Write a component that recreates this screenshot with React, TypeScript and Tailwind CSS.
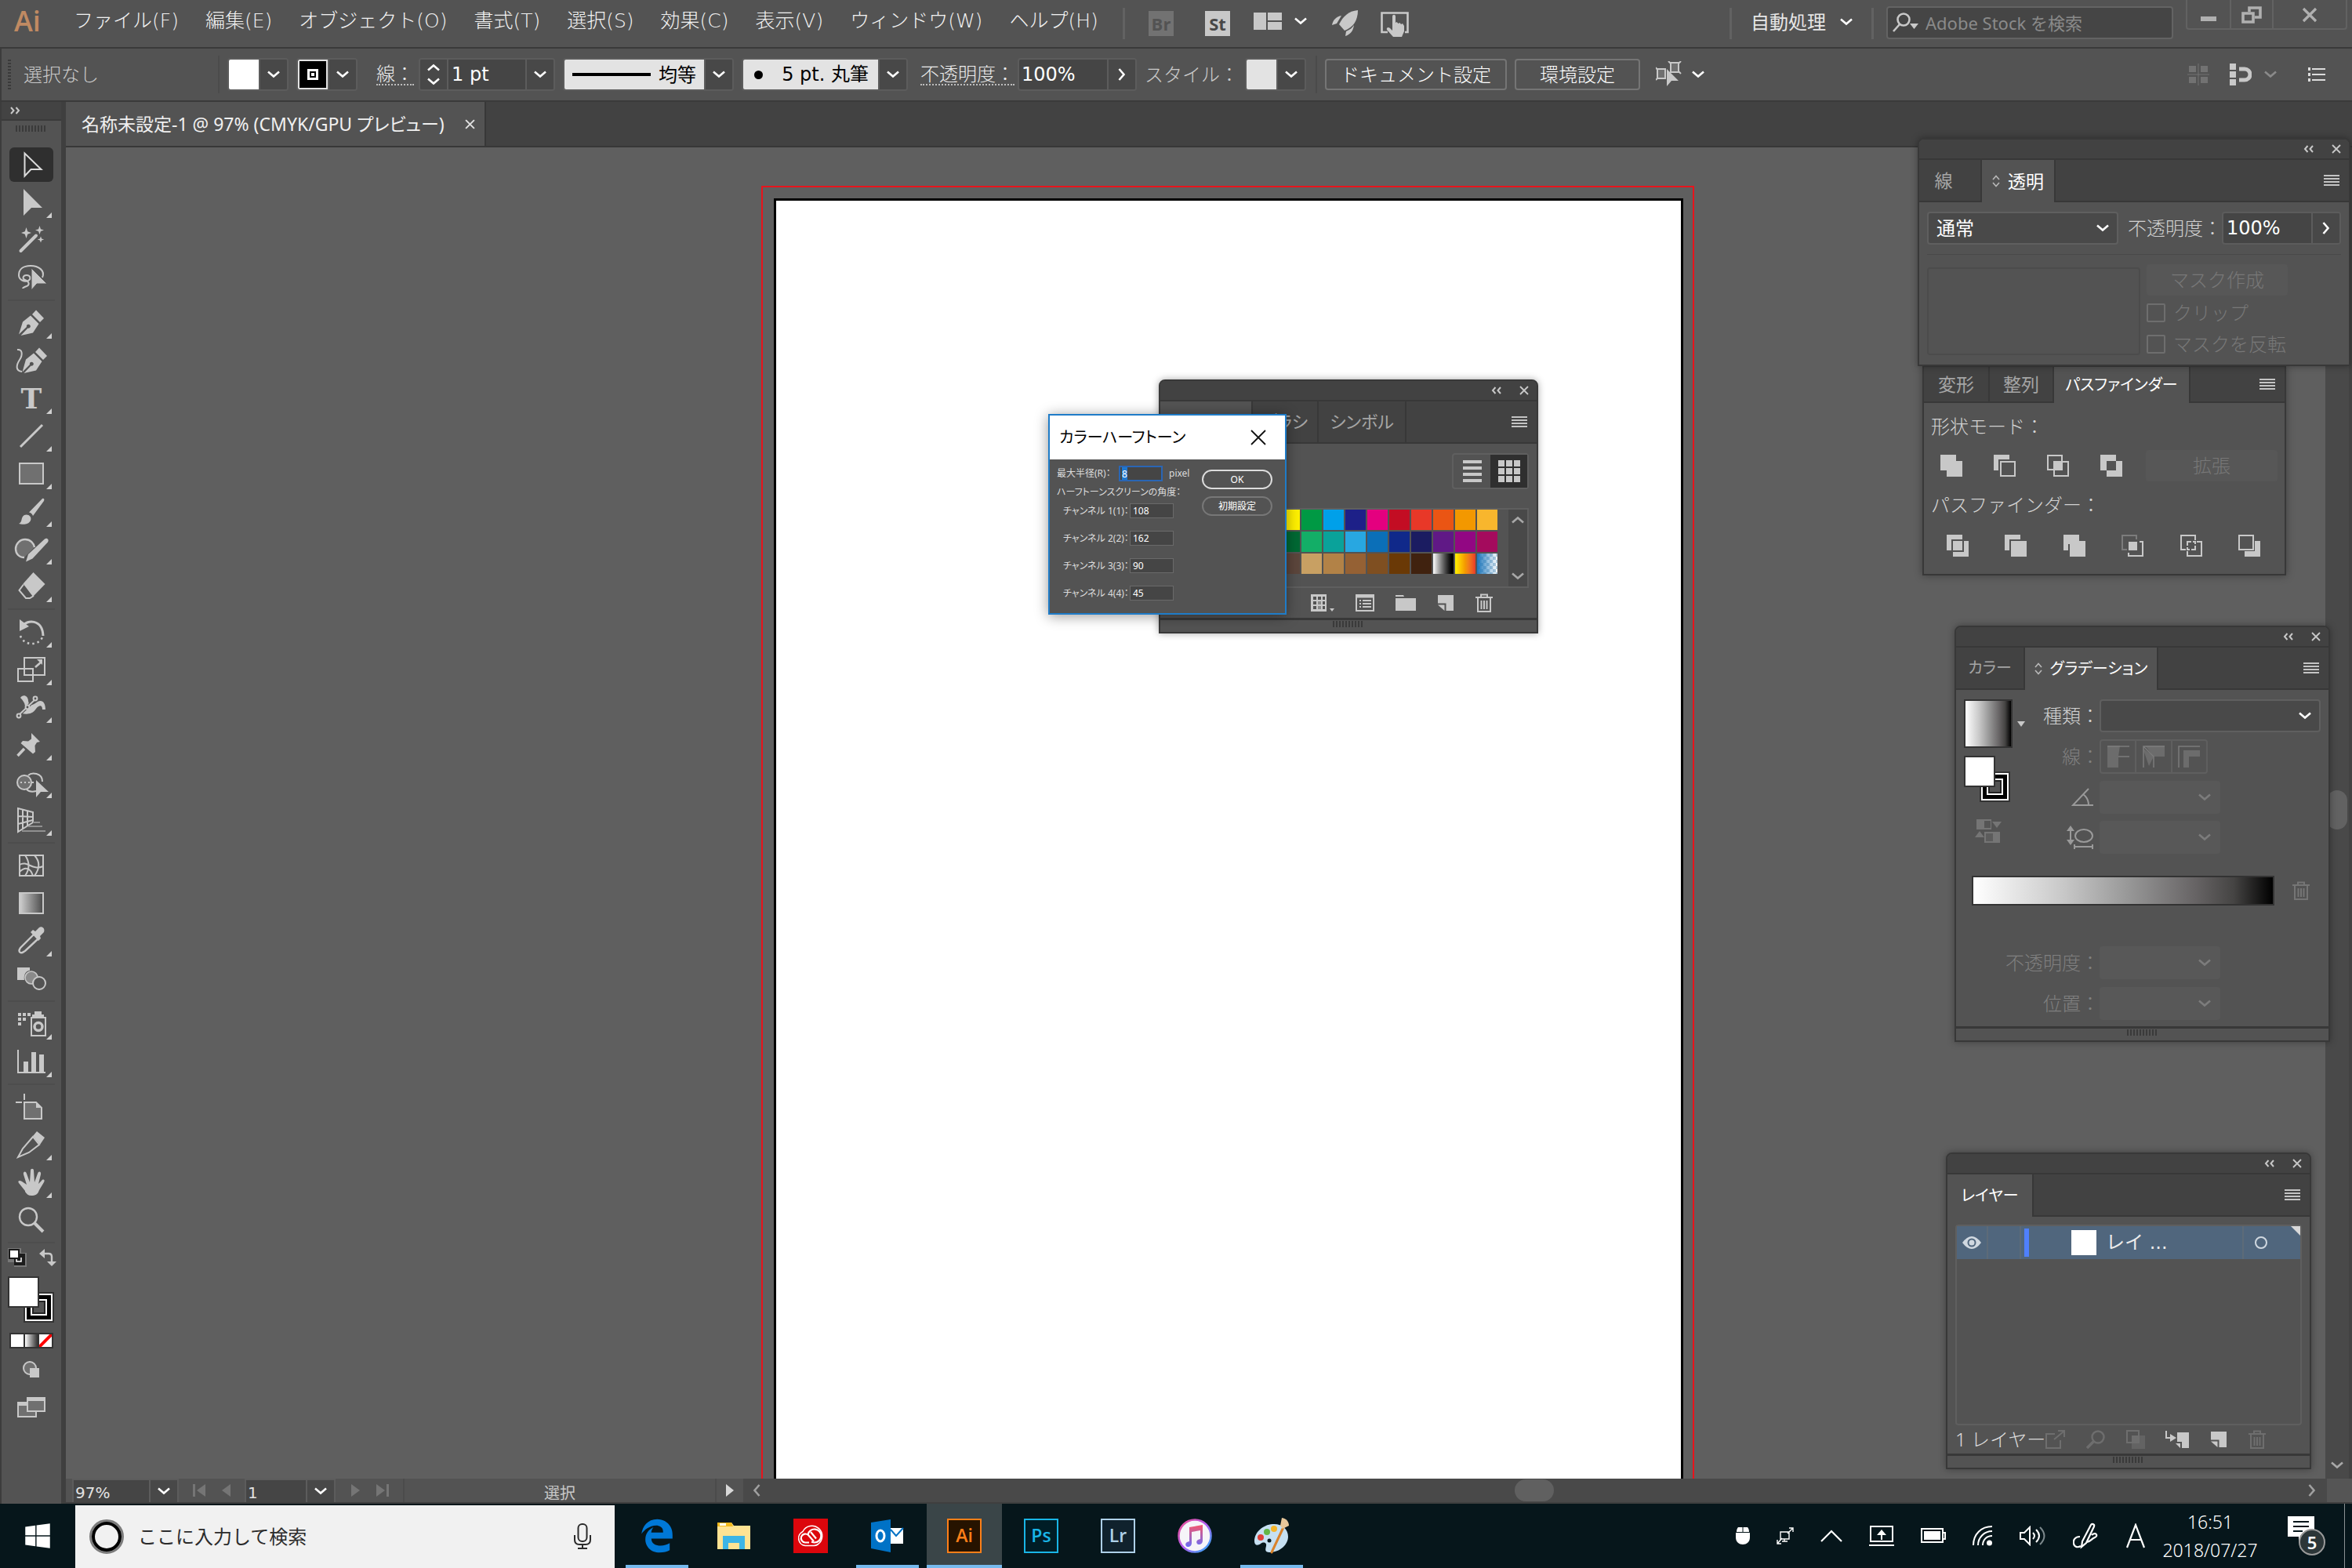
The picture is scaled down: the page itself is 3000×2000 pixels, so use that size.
import React, { useEffect, useRef, useState } from 'react';
import { FaWindows } from 'react-icons/fa';
import { FaEdgeLegacy } from 'react-icons/fa6';
import clsx from 'clsx';

type IconProps = { className?: string };

/* ---------- small shared pieces ---------- */

const Chevron = ({ className = 'w-4 h-[10px] text-white' }: IconProps) => (
  <svg viewBox="0 0 16 10" className={clsx('shrink-0', className)} fill="none" stroke="currentColor" strokeWidth="2.6">
    <path d="M1 1.5 8 7.5 15 1.5" />
  </svg>
);

const ChevronRight = ({ className = 'w-[10px] h-4 text-white' }: IconProps) => (
  <svg viewBox="0 0 10 16" className={clsx('shrink-0', className)} fill="none" stroke="currentColor" strokeWidth="2.6">
    <path d="M1.5 1 7.5 8 1.5 15" />
  </svg>
);

const Collapse = ({ className = '' }: IconProps) => (
  <svg viewBox="0 0 14 10" className={clsx('w-[14px] h-[10px]', className)} fill="none" stroke="#c8c8c8" strokeWidth="2">
    <path d="M5.5 1 2 5l3.5 4M12 1 8.5 5 12 9" />
  </svg>
);

const Cross = ({ className = 'w-3 h-3 text-[#c8c8c8]' }: IconProps) => (
  <svg viewBox="0 0 12 12" className={className} fill="none" stroke="currentColor" strokeWidth="1.8">
    <path d="M1 1l10 10M11 1 1 11" />
  </svg>
);

const Lines = () => (
  <svg viewBox="0 0 20 14" className="w-5 h-[14px]" fill="#c4c4c4">
    <path d="M0 0h20v2H0zM0 4h20v2H0zM0 8h20v2H0zM0 12h20v2H0z" />
  </svg>
);

const UpDown = () => (
  <svg viewBox="0 0 10 16" className="w-[10px] h-4" fill="none" stroke="#b8b8b8" strokeWidth="1.6">
    <path d="M1 6l4-4.5L9 6M1 10l4 4.5L9 10" />
  </svg>
);

const Grip = () => (
  <svg viewBox="0 0 40 8" className="w-10 h-2" fill="#3a3a3a">
    {[0, 4, 8, 12, 16, 20, 24, 28, 32, 36].map((x) => (
      <rect key={x} x={x} y="0" width="2" height="8" />
    ))}
  </svg>
);

const Trash = ({ className = '' }: IconProps) => (
  <svg viewBox="0 0 22 24" className={clsx('w-[22px] h-6', className)} fill="none" stroke="currentColor" strokeWidth="2">
    <path d="M0 5h22M7 4V1.5h8V4M3 6v17h16V6M7.5 9v11M11 9v11M14.5 9v11" />
  </svg>
);

const NewSheet = ({ className = '' }: IconProps) => (
  <svg viewBox="0 0 22 22" className={clsx('w-[22px] h-[22px]', className)} fill="currentColor">
    <path d="M1 1h20v20H11.5V11.5H1z" />
    <path d="M1 13.5h8.5V21z" />
  </svg>
);

const FillStroke = () => (
  <svg viewBox="0 0 60 60" className="w-[60px] h-[60px]">
    <rect x="20" y="20" width="39" height="39" fill="#333" />
    <rect x="22" y="22" width="35" height="35" fill="#fff" />
    <rect x="24" y="24" width="31" height="31" fill="#000" />
    <rect x="29" y="29" width="21" height="21" fill="#fff" />
    <rect x="31" y="31" width="17" height="17" fill="#222" />
    <rect x="33" y="33" width="13" height="13" fill="#535353" />
    <rect x="0" y="0" width="40" height="40" fill="#333" />
    <rect x="2" y="2" width="36" height="36" fill="#fff" />
  </svg>
);

/* ---------- tool icons, all on a 40 unit grid ---------- */

const tools: Record<string, React.ReactNode> = {
  selection: <path d="M11.5 5.5v29l8-8.5h13z" fill="none" stroke="#dcdcdc" strokeWidth="2" />,
  direct: <path d="M10 3v34l10-10h14z" />,
  wand: (
    <>
      <path d="M6.5 34 26 14.5" stroke="currentColor" strokeWidth="4" strokeLinecap="round" />
      <path d="M13.5 4l1.7 5.3L20 11l-4.8 1.7-1.7 5.3-1.7-5.3L7 11l4.8-1.7zM30.5 2l1.4 4.2L36 7.5l-4.1 1.4-1.4 4.2-1.4-4.2L25 7.5l4.1-1.3zM32 15.5l1.2 3 3 1-3 1-1.2 3-1.2-3-3-1 3-1z" />
    </>
  ),
  lasso: (
    <>
      <path d="M34 20C38 11 29 5 19 5S4 10 4 17c0 6 7 9 12 7 4-2 3-7-2-7s-6 5-2 6 7 6 2 8-5 3-5 3" fill="none" stroke="currentColor" strokeWidth="2" />
      <path d="M20 8v28l7-8h13z" stroke="#535353" strokeWidth="1" />
    </>
  ),
  pen: (
    <>
      <path d="M21 9l5-5.5L36 14l-5 5z" />
      <path d="M19 10.5 29.5 21 22 32.5 6.5 36l9-9.5a2.5 2.5 0 1 0-1.5-1.5L4 34.5l5-16z" />
    </>
  ),
  curvature: (
    <>
      <path d="M25 9l5-5.5L40 14l-5 5z" />
      <path d="M23 10.5 33.5 21 26 32.5 10.5 36l9-9.5a2.5 2.5 0 1 0-1.5-1.5L8.5 34.5l4.5-16z" />
      <path d="M2 6c7-1 7 7 3 13s-6 14 3 15" fill="none" stroke="currentColor" strokeWidth="2" />
    </>
  ),
  line: <path d="M6 34 34 6" stroke="currentColor" strokeWidth="3" />,
  rectangle: <rect x="5" y="7" width="30" height="26" fill="#707070" stroke="currentColor" strokeWidth="2" />,
  brush: (
    <>
      <path d="M4 36c5-2 2-8 7-11 5-2 10 2 8 7-3 6-11 5-15 4z" />
      <path d="M17 21.5 34 4c2-1 3 1 2 3L22 26c-1-2.5-2.5-4-5-4.5z" />
    </>
  ),
  shaper: (
    <>
      <path d="M11 31C4 31 0 26 0 20S5 8 12 8s11 5 12 10" fill="#707070" stroke="currentColor" strokeWidth="2.4" />
      <path d="M13 36.5l3-9.5L37 7.5c3-2 6 1 4 4L21.5 32.5z" />
    </>
  ),
  eraser: (
    <>
      <path d="M22.5 2 37.5 17 22 33 9.5 16.5z" />
      <path d="M10 17.5 4.5 25 13 35h5l5-3" fill="none" stroke="currentColor" strokeWidth="2" />
    </>
  ),
  rotate: (
    <>
      <path d="M8 13C14 4 34 3 35 25" fill="none" stroke="currentColor" strokeWidth="3" />
      <path d="M5 4v15l12-6z" />
      <path d="M6 25c4 12 22 14 28 2" fill="none" stroke="currentColor" strokeWidth="2.5" strokeDasharray="2.5 4" />
    </>
  ),
  scale: (
    <g fill="none" stroke="currentColor" strokeWidth="2">
      <path d="M11 5h26v22H11zM3 19h19v16H3z" />
      <path d="M25 17l8-7" strokeWidth="2.6" />
      <path d="M34 7v7l-7-7z" fill="currentColor" stroke="none" />
    </g>
  ),
  width: (
    <>
      <path d="M6 8c3-5 10-3 10 4 1 8 7 5 12 1 5-3 10 0 10 10h-4c0-6-4-6-8-1-5 8-13 7-18 6 7-7 4-14-2-20z" />
      <path d="M4 30 25 10" stroke="#535353" strokeWidth="4" />
      <path d="M4 30 25 10" stroke="currentColor" strokeWidth="1.8" />
      <g fill="#535353" stroke="currentColor" strokeWidth="2">
        <circle cx="4" cy="31" r="2.4" />
        <circle cx="15" cy="20" r="2.4" />
        <circle cx="25" cy="9" r="2.4" />
      </g>
    </>
  ),
  pin: (
    <>
      <path d="M20 5l11 11-4 1-2.5 4 .5 8-3 2.5L6.5 18l2.5-3 7 .5 4-3z" />
      <path d="M2.5 34 11 25" stroke="currentColor" strokeWidth="3.5" />
    </>
  ),
  builder: (
    <>
      <path d="M16 11c4-4 18-4 18 8M14 29c3 3 8 3 12 2" fill="none" stroke="currentColor" strokeWidth="2" />
      <ellipse cx="11" cy="20" rx="9" ry="9" fill="#707070" stroke="currentColor" strokeWidth="2" />
      <path d="M6 20h20" stroke="currentColor" strokeWidth="2" strokeDasharray="2 3" />
      <path d="M26 17v22l6-7h10z" />
    </>
  ),
  perspective: (
    <g fill="none" stroke="currentColor" strokeWidth="2">
      <path d="M3 5v30l19-12V10zM9 6v25M15 8v19M3 15l19 1M3 25l19-5" />
      <path d="M22 23h9M16 28h18M8 34h30" stroke="#909090" />
    </g>
  ),
  mesh: (
    <g fill="none" stroke="currentColor" strokeWidth="2">
      <path d="M5 7h30v26H5z" />
      <path d="M5 19c10-6 16 8 30 2M12 7c6 8 6 18 0 26M24 7c8 9 6 18 0 26M5 28c8-8 14-4 17 5" />
    </g>
  ),
  gradient: (
    <>
      <linearGradient id="toolGradient">
        <stop offset="0" stopColor="#d0d0d0" />
        <stop offset="1" stopColor="#4a4a4a" />
      </linearGradient>
      <rect x="5" y="7" width="30" height="26" fill="url(#toolGradient)" stroke="currentColor" strokeWidth="2" />
    </>
  ),
  eyedropper: (
    <>
      <path d="M23 12 6 29c-2 3-2 5 0 6s4-1 6-2L28 18" fill="none" stroke="currentColor" strokeWidth="2.4" />
      <path d="M19 9l3-3 3 2 5-5c3-2 8 1 6 6l-5 5 1 3-3 3z" />
    </>
  ),
  blend: (
    <>
      <path d="M2 6h16v4c-5 0-8 5-7 12H2z" />
      <ellipse cx="20" cy="19" rx="8" ry="8" fill="#8a8a8a" stroke="currentColor" strokeWidth="1.6" />
      <ellipse cx="30" cy="26" rx="8" ry="8" fill="#535353" stroke="currentColor" strokeWidth="2" />
    </>
  ),
  spray: (
    <>
      <path d="M3 6h4v4H3zM9 6h4v4H9zM15 6h4v4h-4zM3 12h4v4H3zM9 12h4v4H9zM3 18h4v4H3zM24 4h9v4h3v4H21V8h3z" />
      <path d="M20 12h18v23H20z" fill="none" stroke="currentColor" strokeWidth="2" />
      <circle cx="29" cy="23.5" r="5" fill="none" stroke="currentColor" strokeWidth="3.5" />
    </>
  ),
  graph: (
    <>
      <path d="M10 20h6v14h-6zM20 8h6v26h-6zM30 11h6v23h-6z" />
      <path d="M3 5v29h35" fill="none" stroke="currentColor" strokeWidth="2" />
    </>
  ),
  artboard: (
    <>
      <path d="M0 14h8M11 3v8" stroke="currentColor" strokeWidth="2" />
      <path d="M11 14h15l7 7v14H11z" fill="#707070" stroke="currentColor" strokeWidth="2" />
      <path d="M26 14v7h7z" />
    </>
  ),
  slice: (
    <>
      <path d="M22 9l5-6 10 8-6 9z" />
      <path d="M22 10 9 25 3 36l14-6 13-10z" fill="none" stroke="currentColor" strokeWidth="2" />
    </>
  ),
  hand: (
    <path d="M12 31 4 21c-2-3 1-4 4-2l6 4-4-13c-1-4 3-5 4-1l4 11 1-15c0-3 4-3 4 0l1 15 4-11c1-4 5-3 4 1l-3 12 4-4c2-3 5-1 3 2l-6 10c-2 6-5 7-10 7-4 0-6-2-8-5z" />
  ),
  zoom: (
    <>
      <circle cx="16" cy="16" r="11" fill="none" stroke="currentColor" strokeWidth="2.4" />
      <path d="M24 24 35 35" stroke="currentColor" strokeWidth="4" />
    </>
  ),
};

const toolGroups = [
  [['selection', ''], ['direct', 'f'], ['wand', ''], ['lasso', '']],
  [['pen', 'f'], ['curvature', ''], ['type', 'f'], ['line', 'f'], ['rectangle', 'f'], ['brush', 'f'], ['shaper', 'f'], ['eraser', 'f']],
  [['rotate', 'f'], ['scale', 'f'], ['width', 'f'], ['pin', 'f'], ['builder', 'f'], ['perspective', 'f']],
  [['mesh', ''], ['gradient', ''], ['eyedropper', 'f'], ['blend', '']],
  [['spray', 'f'], ['graph', 'f']],
  [['artboard', ''], ['slice', 'f'], ['hand', 'f'], ['zoom', '']],
];

const Toolbar = () => {
  const [active, setActive] = useState('selection');
  return (
    <aside className="w-[84px] shrink-0 border-l-2 border-r-[6px] border-l-[#3c3c3c] border-r-[#3f3f3f] bg-[#535353] flex flex-col items-center">
      <div className="w-full h-6 shrink-0 bg-[#434343] border-b-2 border-[#3a3a3a] flex items-center pl-[10px]">
        <Collapse className="rotate-180" />
      </div>
      <div className="h-8 shrink-0 pt-[6px]">
        <Grip />
      </div>
      {toolGroups.map((group, i) => (
        <div key={i} className="w-full shrink-0 flex flex-col items-center">
          {i > 0 && <div className="w-[60px] h-[2px] my-1 bg-[#4d4d4d]" />}
          {group.map(([name, flyout]) => (
            <button
              key={name}
              aria-label={name}
              onClick={() => setActive(name)}
              className="relative w-[60px] h-12 flex items-center justify-center text-[#c8c8c8]"
            >
              <span
                className={clsx('w-14 h-11 rounded-md flex items-center justify-center', active === name && 'bg-[#2f2f2f]')}
              >
                {name === 'type' ? (
                  <span className="text-[36px] leading-10 font-bold [font-family:'DejaVu_Serif',serif]">T</span>
                ) : (
                  <svg viewBox="0 0 40 40" className="w-10 h-10 overflow-visible" fill="currentColor">
                    {tools[name]}
                  </svg>
                )}
              </span>
              {flyout && (
                <svg viewBox="0 0 7 7" className="absolute right-1 bottom-1 w-[7px] h-[7px]" fill="#d0d0d0">
                  <path d="M7 0v7H0z" />
                </svg>
              )}
            </button>
          ))}
        </div>
      ))}
      <div className="w-[60px] h-[2px] mt-1 bg-[#4d4d4d] shrink-0" />
      <div className="w-16 h-9 shrink-0 flex items-center justify-between pl-[2px]">
        <svg viewBox="0 0 24 24" className="w-6 h-6">
          <path d="M0 0h17v6h7v18H8v-6H0z" fill="#777" />
          <path d="M8 7h14v15H8z" fill="#1c1c1c" />
          <path d="M11 14v3h6v-5" fill="none" stroke="#fff" strokeWidth="1.5" />
          <path d="M1 1h14v13H1z" fill="#1c1c1c" />
          <path d="M3 3h10v9H3z" fill="#fff" />
        </svg>
        <svg viewBox="0 0 22 22" className="w-[22px] h-[22px]" fill="#c8c8c8">
          <path d="M0 6l7-6v12zM10 16h12l-6 6z" />
          <path d="M6 6h6q4 0 4 4v7" fill="none" stroke="#c8c8c8" strokeWidth="2.4" />
        </svg>
      </div>
      <div className="mt-[6px] shrink-0">
        <FillStroke />
      </div>
      <div className="mt-3 h-5 w-14 shrink-0 bg-[#333] p-[2px] flex gap-[2px]">
        <div className="flex-1 bg-white" />
        <div className="flex-1 bg-linear-to-r from-white to-[#333]" />
        <svg viewBox="0 0 16 16" className="flex-1 min-w-0 bg-white">
          <path d="M0 16 16 0" stroke="#f00" strokeWidth="4" />
        </svg>
      </div>
      <svg viewBox="0 0 22 22" className="mt-4 w-[22px] h-[22px] shrink-0">
        <ellipse cx="9" cy="9" rx="8" ry="8" fill="#707070" stroke="#c8c8c8" strokeWidth="2" />
        <path d="M9 9h12v12H9z" fill="#c8c8c8" />
      </svg>
      <svg viewBox="0 0 36 26" className="mt-6 w-9 h-[26px] shrink-0" fill="#707070" stroke="#c8c8c8" strokeWidth="2">
        <path d="M1 7h23v18H1z" />
        <path d="M1 9h23" strokeWidth="4" />
        <path d="M13 1h22v17H13z" />
        <path d="M13 3h22" strokeWidth="4" />
      </svg>
    </aside>
  );
};

/* ---------- top bars ---------- */

const menus = [
  'ファイル(F)', '編集(E)', 'オブジェクト(O)', '書式(T)', '選択(S)', '効果(C)', '表示(V)', 'ウィンドウ(W)', 'ヘルプ(H)',
];

const MenuBar = () => (
  <header className="h-[62px] shrink-0 border-b-2 border-[#3a3a3a] bg-[#535353] flex items-start text-[#e6e6e6]">
    <div className="w-[94px] pl-[18px] pt-[6px] text-[36px] leading-[42px] font-semibold text-[#c08a62] [font-family:'Open_Sans',sans-serif]">Ai</div>
    <nav className="w-[1338px] shrink-0 h-[54px] flex items-center gap-[34px] text-[25px] leading-8 font-light text-[#f2f2f2] whitespace-nowrap [font-family:'DejaVu_Sans','Noto_Sans_CJK_JP',sans-serif]">
      {menus.map((m) => (
        <button key={m}>{m}</button>
      ))}
    </nav>
    <div className="w-[3px] h-10 mt-[10px] bg-[#626262]" />
    <div className="h-[60px] ml-[30px] flex items-center gap-10">
      <span className="w-8 h-8 bg-[#727272] text-[#535353] text-[22px] leading-8 font-bold text-center [font-family:'Open_Sans',sans-serif]">Br</span>
      <span className="w-8 h-8 bg-[#c8c8c8] text-[#484848] text-[22px] leading-8 font-bold text-center [font-family:'Open_Sans',sans-serif]">St</span>
    </div>
    <div className="h-[54px] ml-[30px] flex items-center gap-4">
      <svg viewBox="0 0 36 22" className="w-9 h-[22px]" fill="#c8c8c8">
        <path d="M0 0h16v22H0zM18 0h18v10H18zM18 12h18v10H18z" />
      </svg>
      <Chevron />
    </div>
    <div className="h-[60px] ml-8 flex items-center gap-7 text-[#c8c8c8]">
      <svg viewBox="0 0 34 34" className="w-[34px] h-[34px]" fill="currentColor">
        <path d="M33 0C21 1 14 8 9 18l7 8C27 22 33 13 33 0z" />
        <path d="M12 7C5 8 1 13 0 19l6-2 6-10zM28 19c-1 8-5 12-11 14l1-6c5-2 8-5 10-8z" />
      </svg>
      <svg viewBox="0 0 36 30" className="w-9 h-[30px] overflow-visible" fill="currentColor">
        <path d="M9 26H1.5V1.5h33V26H31" fill="none" stroke="currentColor" strokeWidth="2.6" />
        <path d="M15 6c0-3 4-3 4 0v8l1.5-1 2 2 2-1 1.5 2 2-1 2 3v7l-3 7H16l-8-9c-1-3 2-4 4-2l3 3z" />
      </svg>
    </div>
    <div className="flex-1" />
    <div className="w-[3px] h-10 mt-[10px] bg-[#626262]" />
    <button className="h-[56px] px-6 flex items-center gap-[18px] text-2xl">
      自動処理
      <Chevron />
    </button>
    <div className="w-[3px] h-10 mt-[10px] bg-[#626262]" />
    <label className="ml-4 mt-2 w-[366px] h-[42px] rounded border-2 border-[#636363] bg-[#454545] flex items-center pl-[6px]">
      <svg viewBox="0 0 34 26" className="w-[34px] h-[26px] shrink-0" fill="none" stroke="#c8c8c8" strokeWidth="2.6">
        <circle cx="14" cy="9" r="7.5" />
        <path d="M9 15 1 24" />
        <path d="M22 14h11l-5.5 7z" fill="#c8c8c8" stroke="none" />
      </svg>
      <input
        placeholder="Adobe Stock を検索"
        aria-label="Adobe Stock を検索"
        className="ml-2 flex-1 min-w-0 bg-transparent text-[22px] outline-none placeholder:text-[#8a8a8a]"
      />
    </label>
    <div className="ml-4 mr-[6px] w-[206px] h-[38px] border-2 border-t-0 border-[#626262] rounded-b flex text-[#b0b0b0]">
      <button aria-label="最小化" className="w-14 border-r-2 border-[#626262] flex justify-center pt-[21px]">
        <span className="w-5 h-[6px] bg-[#b0b0b0]" />
      </button>
      <button aria-label="元に戻す" className="w-[54px] border-r-2 border-[#626262] flex justify-center pt-2">
        <svg viewBox="0 0 26 22" className="w-[26px] h-[22px]" fill="none" stroke="currentColor" strokeWidth="3.6">
          <path d="M10 7V2h14v12h-7" />
          <path d="M2 9h13v11H2z" />
        </svg>
      </button>
      <button aria-label="閉じる" className="flex-1 flex justify-center pt-[9px]">
        <svg viewBox="0 0 20 20" className="w-5 h-5" fill="none" stroke="currentColor" strokeWidth="3.2">
          <path d="M2 2l16 16M18 2 2 18" />
        </svg>
      </button>
    </div>
  </header>
);

const ChevCell = ({ label, right }: { label: string; right?: boolean }) => (
  <button aria-label={label} className="w-9 h-full shrink-0 bg-[#484848] border-l-2 border-[#5c5c5c] flex items-center justify-center">
    {right ? <ChevronRight /> : <Chevron />}
  </button>
);

const boxCls = 'h-[42px] shrink-0 rounded border-2 border-[#5c5c5c] bg-[#454545] flex items-center overflow-hidden';

const ControlBar = () => (
  <section className="h-[68px] shrink-0 border-b-2 border-[#3a3a3a] border-l-2 border-l-[#3c3c3c] bg-[#535353] flex items-center text-2xl font-light text-[#ececec] whitespace-nowrap">
    <div className="ml-2 w-1 h-[38px] bg-[repeating-linear-gradient(#3a3a3a_0_2px,transparent_2px_4px)]" />
    <span className="ml-4 w-[248px] text-[#cacaca]">選択なし</span>
    <div className="w-[2px] h-12 bg-[#4b4b4b]" />
    <div className={clsx(boxCls, 'ml-[10px] w-[78px]')}>
      <div className="flex-1 h-full bg-white" />
      <ChevCell label="塗り" />
    </div>
    <div className={clsx(boxCls, 'ml-[10px] w-[78px]')}>
      <div className="flex-1 h-full bg-black border-2 border-[#e3e3e3] flex items-center justify-center">
        <div className="w-[14px] h-[14px] border-[3px] border-white flex items-center justify-center">
          <div className="w-1 h-1 bg-white" />
        </div>
      </div>
      <ChevCell label="線の色" />
    </div>
    <label htmlFor="strokeWidth" className="ml-6 border-b-2 border-dotted border-[#bdbdbd] leading-[26px]">線：</label>
    <div className={clsx(boxCls, 'ml-[6px] w-[174px]')}>
      <button aria-label="線幅の増減" className="w-9 h-full bg-[#484848] border-r-2 border-[#5c5c5c] flex flex-col items-center justify-center gap-2">
        <Chevron className="w-4 h-[10px] rotate-180 text-white" />
        <Chevron />
      </button>
      <input id="strokeWidth" defaultValue="1 pt" className="flex-1 min-w-0 pl-1 bg-transparent text-white font-normal outline-none [font-family:'DejaVu_Sans',sans-serif]" />
      <ChevCell label="線幅の一覧" />
    </div>
    <div className={clsx(boxCls, 'ml-[10px] w-[218px]')}>
      <div className="flex-1 h-full bg-[#e3e3e3] text-black font-normal flex items-center justify-between px-[10px]">
        <span className="w-[100px] h-1 bg-black" />
        均等
      </div>
      <ChevCell label="可変線幅" />
    </div>
    <div className={clsx(boxCls, 'ml-[10px] w-[212px]')}>
      <div className="flex-1 h-full bg-[#e3e3e3] text-black font-normal flex items-center justify-between pl-[14px] pr-3 [font-family:'DejaVu_Sans','Noto_Sans_CJK_JP',sans-serif]">
        <span className="w-[11px] h-[11px] rounded-full bg-black" />
        5 pt. 丸筆
      </div>
      <ChevCell label="ブラシ定義" />
    </div>
    <label htmlFor="opacity" className="ml-4 border-b-2 border-dotted border-[#bdbdbd] leading-[26px]">不透明度：</label>
    <div className={clsx(boxCls, 'ml-1 w-[152px]')}>
      <input id="opacity" defaultValue="100%" className="flex-1 min-w-0 pl-[3px] bg-transparent text-white font-normal outline-none [font-family:'DejaVu_Sans',sans-serif]" />
      <ChevCell label="不透明度を変更" right />
    </div>
    <span className="ml-[10px] text-[#cacaca]">スタイル：</span>
    <div className={clsx(boxCls, 'ml-2 w-[78px]')}>
      <div className="flex-1 h-full bg-[#e3e3e3]" />
      <ChevCell label="グラフィックスタイル" />
    </div>
    <div className="ml-3 w-[2px] h-12 bg-[#4b4b4b]" />
    <button className="ml-[10px] w-[232px] h-10 rounded border-2 border-[#757575] text-white">ドキュメント設定</button>
    <button className="ml-[10px] w-[160px] h-10 rounded border-2 border-[#757575] text-white">環境設定</button>
    <button aria-label="類似オブジェクトを選択" className="ml-5 flex items-center gap-3">
      <svg viewBox="0 0 34 34" className="w-[34px] h-[34px]" fill="none" stroke="#c8c8c8" strokeWidth="2">
        <path d="M19 2h10v12H19zM2 10h10v12H2z" fill="#707070" />
        <path d="M16 0l3 3M32 0l-3 3M32 16l-3-3M0 8l2 3M0 24l3-3" />
        <path d="M14 10v22l6-7h9z" fill="#c8c8c8" stroke="none" />
      </svg>
      <Chevron />
    </button>
    <div className="flex-1" />
    <svg viewBox="0 0 28 28" className="w-7 h-7" fill="#727272">
      <path d="M2 3h9v8H2zM17 3h9v8h-9zM2 17h9v8H2zM17 17h9v8h-9z" />
      <path d="M13.5 0h1v28h-1zM0 13.5h28v1H0z" />
    </svg>
    <svg viewBox="0 0 28 28" className="ml-[26px] w-7 h-7" fill="#c8c8c8">
      <path d="M0 0h8v8H0zM0 10h8v8H0zM0 20h8v8H0z" />
      <path d="M12 7h7a7 7 0 0 1 0 14h-7" fill="none" stroke="#c8c8c8" strokeWidth="5" />
    </svg>
    <Chevron className="ml-4 w-4 h-[10px] text-[#8a8a8a]" />
    <svg viewBox="0 0 22 18" className="ml-10 mr-[34px] w-[22px] h-[18px]" fill="#dcdcdc">
      <path d="M0 0h3v4H0zM5 1h17v2H5zM0 7h3v4H0zM5 8h17v2H5zM0 14h3v4H0zM5 15h17v2H5z" />
    </svg>
  </section>
);

const StatusBar = () => (
  <footer className="h-8 shrink-0 bg-[#535353] border-b-2 border-[#3f3f3f] flex items-center text-xl leading-8 text-[#e2e2e2]">
    <div className="ml-2 h-full w-[136px] bg-[#454545] border-2 border-b-0 border-[#5c5c5c] flex overflow-hidden">
      <input aria-label="ズーム" defaultValue="97%" className="flex-1 min-w-0 pl-[2px] pt-1 bg-transparent outline-none [font-family:'DejaVu_Sans',sans-serif]" />
      <ChevCell label="ズームの一覧" />
    </div>
    <svg viewBox="0 0 50 16" className="ml-[18px] w-[50px] h-4" fill="#757575">
      <path d="M0 0h3v16H0zM16 0v16L5 8zM48 0v16L37 8z" />
    </svg>
    <div className="ml-4 h-full w-[116px] bg-[#454545] border-2 border-b-0 border-[#5c5c5c] flex overflow-hidden">
      <input aria-label="アートボード" defaultValue="1" className="flex-1 min-w-0 pl-[2px] pt-1 bg-transparent outline-none [font-family:'DejaVu_Sans',sans-serif]" />
      <ChevCell label="アートボードの一覧" />
    </div>
    <svg viewBox="0 0 50 16" className="ml-5 w-[50px] h-4" fill="#757575">
      <path d="M0 0v16l11-8zM32 0v16l11-8zM45 0h3v16h-3z" />
    </svg>
    <div className="ml-4 w-[2px] h-full bg-[#4b4b4b]" />
    <span className="w-[396px] text-center pt-2 text-[#c8c8c8]">選択</span>
    <div className="w-[2px] h-full bg-[#4b4b4b]" />
    <svg viewBox="0 0 10 16" className="ml-3 w-[10px] h-4" fill="#d8d8d8">
      <path d="M0 0v16l10-8z" />
    </svg>
    <div className="ml-3 flex-1 h-full bg-[#494949] flex items-center justify-between pl-3 pr-[14px]">
      <ChevronRight className="w-[10px] h-4 rotate-180 text-[#a0a0a0]" />
      <div className="w-[50px] h-7 rounded-full bg-[#606060]" />
      <ChevronRight className="w-[10px] h-4 text-[#a0a0a0]" />
    </div>
    <div className="w-8 h-full bg-[#555]" />
  </footer>
);

/* ---------- floating panels ---------- */

const panelCls = 'absolute border-2 border-[#383838] bg-[#535353] shadow-[0_0_10px_rgba(0,0,0,0.35)] text-2xl font-light text-[#d2d2d2] whitespace-nowrap';

const TitleBar = () => (
  <div className="h-[26px] rounded-t-md bg-[#424242] border-b-2 border-[#383838] flex items-center justify-end gap-[22px] pr-[10px]">
    <button aria-label="折りたたむ"><Collapse /></button>
    <button aria-label="閉じる"><Cross /></button>
  </div>
);

const Tab = ({ active, className, children }: { active?: boolean; className?: string; children?: React.ReactNode }) => (
  <button
    role="tab"
    aria-selected={!!active}
    className={clsx(
      "border-r-2 border-[#383838] flex items-center justify-center gap-[10px] font-normal [font-feature-settings:'palt']",
      active ? 'bg-[#535353] text-white' : 'bg-[#424242] text-[#a5a5a5] border-b-2',
      className,
    )}
  >
    {children}
  </button>
);

const TabFill = () => (
  <div className="flex-1 bg-[#424242] border-b-2 border-[#383838] flex items-center justify-end pr-3">
    <button aria-label="パネルメニュー"><Lines /></button>
  </div>
);

const PanelGrip = () => (
  <div className="h-[18px] border-t-[3px] border-[#383838] flex justify-center pt-px">
    <Grip />
  </div>
);

const Select = ({ id, value, disabled, className }: { id: string; value?: string; disabled?: boolean; className?: string }) => (
  <div className={clsx('relative', className)}>
    <select
      id={id}
      aria-label={id}
      disabled={disabled}
      className={clsx(
        'block w-full h-[42px] appearance-none rounded pl-[10px] font-normal outline-none',
        disabled ? 'bg-[#585858]' : 'bg-[#494949] border-2 border-[#5f5f5f] text-white',
      )}
    >
      <option>{value}</option>
    </select>
    <Chevron className={clsx('absolute right-3 top-4 w-4 h-[10px]', disabled ? 'text-[#7c7c7c]' : 'text-white')} />
  </div>
);

const TransparencyPanel = () => (
  <section className={clsx(panelCls, 'right-[2px] top-[176px] w-[552px] rounded-t-lg')}>
    <TitleBar />
    <div className="h-[54px] flex" role="tablist">
      <Tab className="w-20 pr-4 text-[23px]">線</Tab>
      <Tab active className="w-[94px] text-[23px]"><UpDown />透明</Tab>
      <TabFill />
    </div>
    <div className="px-[10px] pt-3 pb-2">
      <div className="flex items-center">
        <Select id="描画モード" value="通常" className="w-[244px]" />
        <label htmlFor="panelOpacity" className="ml-3 w-[120px]">不透明度：</label>
        <div className="flex-1 h-[42px] rounded border-2 border-[#5c5c5c] bg-[#454545] flex overflow-hidden">
          <input id="panelOpacity" defaultValue="100%" className="flex-1 min-w-0 pl-1 bg-transparent text-white font-normal outline-none [font-family:'DejaVu_Sans',sans-serif]" />
          <ChevCell label="不透明度を変更" right />
        </div>
      </div>
      <div className="mt-3 h-px bg-[#494949]" />
      <div className="mt-3 flex gap-2">
        <div className="mt-1 w-[272px] h-28 rounded border-2 border-[#4c4c4c]" />
        <div className="flex flex-col text-[#787878]">
          <button disabled className="w-[180px] h-10 rounded bg-[#575757]">マスク作成</button>
          <label className="mt-1 h-9 flex items-center gap-[10px]">
            <input type="checkbox" disabled className="appearance-none w-6 h-6 rounded-xs border-2 border-[#6e6e6e]" />
            クリップ
          </label>
          <label className="mt-1 h-9 flex items-center gap-[10px]">
            <input type="checkbox" disabled className="appearance-none w-6 h-6 rounded-xs border-2 border-[#6e6e6e]" />
            マスクを反転
          </label>
        </div>
      </div>
    </div>
  </section>
);

const shapeModes = [
  <path d="M0 0h20v8h8v20H8V20H0z" />,
  <><path d="M0 0h20v6H6v14H0z" /><path d="M9 9h18v18H9z" fill="none" stroke="currentColor" strokeWidth="2" /></>,
  <><path d="M1 1h18v18H1zM9 9h18v18H9z" fill="none" stroke="currentColor" strokeWidth="2" /><path d="M8 8h12v12H8z" /></>,
  <path fillRule="evenodd" d="M0 0h20v8h8v20H8V20H0zM8 8v12h12V8z" />,
];

const pathfinders = [
  <><path d="M0 0h20v6H6v14H0zM22 8h6v20H8v-6h14z" /><path d="M8 8h12v12H8z" /></>,
  <><path d="M0 0h20v6H6v14H0z" /><path d="M8 8h20v20H8z" /></>,
  <><path d="M0 0h20v8h8v20H8V12H6v8H0z" /></>,
  <><path d="M7 19H1V1h18v5" fill="none" stroke="#7c7c7c" strokeWidth="2" /><path d="M9 9h11v11H9z" /><path d="M23 9h4v18H9v-4" fill="none" stroke="currentColor" strokeWidth="2" /></>,
  <g fill="none" stroke="currentColor" strokeWidth="2"><path d="M7 19H1V1h18v6M9 14V9h5M19 14v5h-5M21 9h6v18H9v-6" /><path d="M16 9h3v3M9 16v3h3" /></g>,
  <><path d="M1 1h18v18H1z" fill="none" stroke="currentColor" strokeWidth="2" /><path d="M21 8h7v20H8v-7h13z" /></>,
];

const PathIcon = ({ label, children }: { label: string; children: React.ReactNode }) => (
  <button aria-label={label} className="w-7 h-7">
    <svg viewBox="0 0 28 28" className="w-7 h-7" fill="#c8c8c8" color="#c8c8c8">{children}</svg>
  </button>
);

const PathfinderPanel = () => (
  <section className={clsx(panelCls, 'right-[84px] top-[466px] w-[464px]')}>
    <div className="h-[46px] flex" role="tablist">
      <Tab className="w-[84px] text-[23px]">変形</Tab>
      <Tab className="w-[82px] text-[23px]">整列</Tab>
      <Tab active className="w-[174px] text-[20px]">パスファインダー</Tab>
      <TabFill />
    </div>
    <div className="px-[9px] pt-3 pb-[22px]">
      <p className="leading-9">形状モード：</p>
      <div className="mt-3 pl-3 h-10 flex items-center justify-between">
        <div className="flex gap-10">
          {shapeModes.map((shape, i) => (
            <PathIcon key={i} label={`形状モード ${i + 1}`}>{shape}</PathIcon>
          ))}
        </div>
        <button disabled className="w-[168px] h-10 rounded bg-[#575757] text-[#787878]">拡張</button>
      </div>
      <p className="mt-3 leading-9">パスファインダー：</p>
      <div className="mt-5 pl-5 pr-[22px] flex justify-between">
        {pathfinders.map((shape, i) => (
          <PathIcon key={i} label={`パスファインダー ${i + 1}`}>{shape}</PathIcon>
        ))}
      </div>
    </div>
  </section>
);

const ramp = 'bg-[linear-gradient(to_right,#fff,#c8c8c8_30%,#979797_52%,#676465_74%,#454443_87%,#000)]';

const GradientPanel = () => (
  <section className={clsx(panelCls, 'right-[28px] top-[798px] w-[479px] rounded-t-lg')}>
    <TitleBar />
    <div className="h-[54px] flex" role="tablist">
      <Tab className="w-[88px] text-xl">カラー</Tab>
      <Tab active className="w-[170px] text-xl"><UpDown />グラデーション</Tab>
      <TabFill />
    </div>
    <div className="flex px-[10px] pt-3">
      <div className="w-[82px] shrink-0">
        <div className="flex items-center gap-[6px]">
          <div className={clsx('w-[62px] h-[62px] border-2 border-[#333]', ramp)} />
          <svg viewBox="0 0 10 7" className="w-[10px] h-[7px]" fill="#c8c8c8"><path d="M0 0h10L5 7z" /></svg>
        </div>
        <div className="mt-[10px]"><FillStroke /></div>
        <svg viewBox="0 0 34 32" className="mt-5 ml-[14px] w-[34px] h-8" fill="#757575">
          <path d="M2 1h19v13H2z" /><path d="M12 3h8v9h-8z" fill="#555" />
          <path d="M22 4h12l-6 8zM0 24h12l-6-8z" />
          <path d="M12 17h20v14H12z" /><path d="M14 19h9v10h-9z" fill="#5c5c5c" />
        </svg>
      </div>
      <div className="flex-1 grid grid-cols-[91px_1fr] gap-y-[9px] items-center">
        <label htmlFor="種類" className="text-right">種類：</label>
        <Select id="種類" value="" />
        <span className="text-right text-[#808080]">線：</span>
        <div className="w-[138px] h-11 rounded border-2 border-[#5f5f5f] flex">
          {[0, 1, 2].map((i) => (
            <button key={i} disabled aria-label={`線 ${i + 1}`} className={clsx('flex-1 flex items-center justify-center', i < 2 && 'border-r-2 border-[#5f5f5f]')}>
              <svg viewBox="0 0 28 28" className="w-7 h-7" fill="#6c6c6c">
                {i === 0 && <path d="M0 0h16L14 14v14H0z" />}
                {i === 1 && <path d="M3 0h25v14H14zM0 3l14 11-6 12z" />}
                {i === 2 && <path d="M7 6h21v8H14v14H7z" />}
                <path d={i === 0 ? 'M0 1h28M28 14H14' : i === 1 ? 'M1 28V1h27M14 28V14L1 1' : 'M1 28V1h27'} fill="none" stroke="#7c7c7c" strokeWidth="1.5" />
              </svg>
            </button>
          ))}
        </div>
        <svg viewBox="0 0 28 26" className="justify-self-end mr-2 w-7 h-[26px]" fill="none" stroke="#9a9a9a" strokeWidth="2">
          <path d="M22 2 2 23h26M15 9q7 5 7 14" />
        </svg>
        <Select id="角度" disabled className="w-[154px]" />
        <svg viewBox="0 0 34 30" className="justify-self-end mr-2 w-[34px] h-[30px]" fill="none" stroke="#9a9a9a" strokeWidth="2">
          <path d="M5 5v16M10 27h23M10 24v6M33 24v6" />
          <ellipse cx="22" cy="13" rx="11" ry="8" />
          <path d="M0 7l5-7 5 7zM0 18l5 7 5-7z" fill="#9a9a9a" stroke="none" />
        </svg>
        <Select id="縦横比" disabled className="w-[154px]" />
      </div>
    </div>
    <div className="mt-7 pl-5 pr-6 flex items-center justify-between text-[#757575]">
      <div className={clsx('w-[386px] h-[38px] border-2 border-[#333]', ramp)} />
      <Trash />
    </div>
    <div className="mt-[52px] pl-[92px] pb-2 grid grid-cols-[91px_1fr] gap-y-[10px] items-center text-[#808080]">
      <label htmlFor="分岐点の不透明度" className="justify-self-end">不透明度：</label>
      <Select id="分岐点の不透明度" disabled className="w-[154px]" />
      <label htmlFor="位置" className="justify-self-end">位置：</label>
      <Select id="位置" disabled className="w-[154px]" />
    </div>
    <PanelGrip />
  </section>
);

const LayersPanel = () => (
  <section className={clsx(panelCls, 'right-[52px] top-[1470px] w-[466px] rounded-t-lg')}>
    <TitleBar />
    <div className="h-[54px] flex" role="tablist">
      <Tab active className="w-[110px] text-xl">レイヤー</Tab>
      <TabFill />
    </div>
    <div className="mx-[10px] mt-[10px] h-[256px] rounded border-2 border-[#5f5f5f]">
      <div className="relative h-[42px] bg-[#50667d] flex items-center text-[#ececec]">
        <div className="w-10 h-full border-r-2 border-[#5d6b78] flex items-center justify-center">
          <svg viewBox="0 0 24 16" className="w-6 h-4" fill="#d0d8e0">
            <path d="M0 8q12-16 24 0-12 16-24 0z" />
            <circle cx="12" cy="8" r="4.5" fill="none" stroke="#50667d" strokeWidth="2" />
          </svg>
        </div>
        <div className="w-[42px] h-full border-r-2 border-[#5d6b78]" />
        <div className="ml-1 w-[6px] h-9 bg-[#4f80ff]" />
        <div className="ml-[54px] w-8 h-8 bg-white" />
        <span className="ml-3 flex-1 font-normal [font-family:'DejaVu_Sans','Noto_Sans_CJK_JP',sans-serif]">レイ ...</span>
        <div className="w-[74px] h-full border-l-2 border-[#5d6b78] flex items-center pl-[14px]">
          <span className="w-4 h-4 rounded-full border-2 border-[#d0d8e0]" />
        </div>
        <svg viewBox="0 0 12 12" className="absolute right-0 top-0 w-3 h-3" fill="#d8d8d8"><path d="M0 0h12v12z" /></svg>
      </div>
    </div>
    <div className="h-9 pl-[10px] pr-14 flex items-center text-[#6e6e6e]">
      <span className="w-[114px] text-[#dcdcdc]">1 レイヤー</span>
      <div className="flex-1 flex items-center justify-between">
        <svg viewBox="0 0 26 24" className="w-[26px] h-6" fill="none" stroke="currentColor" strokeWidth="2">
          <path d="M13 5H2v18h18V13M12 12 24 2M17 1h8v8" />
        </svg>
        <svg viewBox="0 0 24 24" className="w-6 h-6" fill="none" stroke="currentColor" strokeWidth="2.4">
          <circle cx="15" cy="9" r="7.5" /><path d="M10 14 1 23" strokeWidth="3.5" />
        </svg>
        <svg viewBox="0 0 24 24" className="w-6 h-6" fill="currentColor">
          <path d="M1 1h15v15H1z" fill="none" stroke="currentColor" strokeWidth="2" />
          <path d="M7 7h17v17H7z" opacity="0.6" /><path d="M7 7h9v9H7z" />
        </svg>
        <svg viewBox="0 0 30 22" className="w-[30px] h-[22px]" fill="#c8c8c8">
          <path d="M1 0v9h7" fill="none" stroke="#c8c8c8" strokeWidth="2" />
          <path d="M6 4l8 5-8 5zM15 2h15v20H21V14h-6zM13 16h6v6z" />
        </svg>
        <NewSheet className="text-[#c8c8c8]" />
        <Trash />
      </div>
    </div>
    <PanelGrip />
  </section>
);

const swatchRows = [
  ['#fff', '#fff', '#fff', '#000', '#e60012', '#fff100', '#009944', '#00a0e9', '#1d2088', '#e4007f', '#c30d23', '#e83828', '#ea5514', '#f39800', '#f8b62d'],
  ['#fcc800', '#fff100', '#cfdb00', '#8fc31f', '#22ac38', '#006934', '#13ae67', '#0aa29a', '#28a7e1', '#0b6fb8', '#10298a', '#1b1c61', '#601986', '#920783', '#a40b5d'],
  ['#e5006a', '#e4004f', '#c9a98b', '#9b8574', '#7a6455', '#5c463c', '#c8a063', '#b28247', '#956134', '#7f4f21', '#6a3906', '#40220f'],
];

const SwatchesPanel = () => (
  <section className={clsx(panelCls, 'left-[1478px] top-[484px] w-[484px] rounded-t-lg')}>
    <TitleBar />
    <div className="h-[54px] flex" role="tablist">
      <Tab active className="w-[118px] text-xl">スウォッチ</Tab>
      <Tab className="w-[84px] text-[22px]">ブラシ</Tab>
      <Tab className="w-28 text-[22px]">シンボル</Tab>
      <TabFill />
    </div>
    <div className="px-[10px] pt-3">
      <div className="ml-auto w-[98px] h-[46px] rounded border-2 border-[#5f5f5f] flex">
        <button aria-label="リスト表示" className="flex-1 flex items-center justify-center">
          <svg viewBox="0 0 24 28" className="w-6 h-7" fill="#c8c8c8"><path d="M0 0h24v4H0zM0 8h24v4H0zM0 16h24v4H0zM0 24h24v4H0z" /></svg>
        </button>
        <button aria-label="サムネール表示" className="flex-1 bg-[#2f2f2f] flex items-center justify-center">
          <svg viewBox="0 0 28 28" className="w-7 h-7" fill="#c8c8c8">
            <path d="M0 0h8v8H0zM10 0h8v8h-8zM20 0h8v8h-8zM0 10h8v8H0zM10 10h8v8h-8zM20 10h8v8h-8zM0 20h8v8H0zM10 20h8v8h-8zM20 20h8v8h-8z" />
          </svg>
        </button>
      </div>
      <div className="mt-6 h-[102px] border-2 border-[#5f5f5f] flex justify-between">
        <div className="flex flex-col gap-[2px]">
          {swatchRows.map((row, i) => (
            <div key={i} className="flex gap-[2px]">
              {row.map((c, j) => (
                <div key={j} className="w-[26px] h-[26px]" style={{ backgroundColor: c }} />
              ))}
              {i === 2 && (
                <>
                  <div className="w-[26px] h-[26px] bg-linear-to-r from-white to-black" />
                  <div className="w-[26px] h-[26px] bg-linear-to-r from-[#fff100] via-[#f39800] to-[#e83828]" />
                  <div className="w-[26px] h-[26px] bg-[repeating-conic-gradient(#ffffff_0_25%,#b8d0e0_0_50%)] bg-size-[8px_8px]">
                    <div className="w-full h-full bg-linear-to-r from-[#1d76bb] to-transparent" />
                  </div>
                </>
              )}
            </div>
          ))}
        </div>
        <div className="w-6 bg-[#494949] flex flex-col items-center justify-between py-2">
          <Chevron className="w-4 h-[10px] rotate-180 text-[#a8a8a8]" />
          <Chevron className="w-4 h-[10px] text-[#a8a8a8]" />
        </div>
      </div>
      <div className="h-[38px] ml-[182px] mr-[46px] flex items-center justify-between text-[#c8c8c8]">
        <svg viewBox="0 0 30 22" className="w-[30px] h-[22px]" fill="currentColor">
          <path d="M0 0h20v22H0z" />
          <path d="M3 3h4v4H3zM9 3h4v4H9zM15 3h3v4h-3zM3 9h4v4H3zM15 9h3v4h-3zM3 15h4v4H3zM15 15h3v4h-3z" fill="#535353" />
          <path d="M9 9h4v4H9zM9 15h4v4H9z" fill="#888" />
          <path d="M24 18h6l-3 4z" />
        </svg>
        <svg viewBox="0 0 24 22" className="w-6 h-[22px]" fill="none" stroke="currentColor" strokeWidth="2">
          <path d="M1 1h22v20H1z" /><path d="M1 3h22" strokeWidth="3" />
          <path d="M5 8h2M9 8h11M5 12h2M9 12h11M5 16h2M9 16h11" />
        </svg>
        <svg viewBox="0 0 26 20" className="w-[26px] h-5" fill="currentColor"><path d="M0 0h10l1 2H0zM0 4h26v16H0z" /></svg>
        <NewSheet />
        <Trash />
      </div>
    </div>
    <PanelGrip />
  </section>
);

const channels = [
  ['チャンネル 1(1)：', '108'],
  ['チャンネル 2(2)：', '162'],
  ['チャンネル 3(3)：', '90'],
  ['チャンネル 4(4)：', '45'],
];

const HalftoneDialog = () => {
  const radius = useRef<HTMLInputElement>(null);

  useEffect(() => {
    radius.current?.focus();
    radius.current?.select();
  }, []);

  return (
    <section
      role="dialog"
      aria-label="カラーハーフトーン"
      className="absolute left-[1337px] top-[528px] w-[304px] h-[256px] border-2 border-[#1f7cc8] bg-[#535353] shadow-[0_2px_16px_rgba(0,0,0,0.4)] text-[#dcdcdc] text-[12px] leading-4 whitespace-nowrap [font-feature-settings:'palt']"
    >
      <div className="h-14 bg-white text-black flex items-center justify-between pl-3 pr-6">
        <h2 className="text-xl leading-6">カラーハーフトーン</h2>
        <button aria-label="閉じる">
          <svg viewBox="0 0 20 20" className="w-5 h-5" fill="none" stroke="#111" strokeWidth="1.8">
            <path d="M1 1l18 18M19 1 1 19" />
          </svg>
        </button>
      </div>
      <div className="flex pl-[9px] pr-4 pt-2 justify-between">
        <div>
          <div className="h-5 flex items-center">
            <label htmlFor="radius" className="w-[79px]">最大半径(R)：</label>
            <input
              id="radius"
              ref={radius}
              defaultValue="8"
              className="w-14 h-5 px-[2px] bg-[#454545] border-2 border-[#2a66b4] text-white outline-none selection:bg-[#1f78d0] selection:text-white"
            />
            <span className="ml-2">pixel</span>
          </div>
          <p className="mt-[6px]">ハーフトーンスクリーンの角度：</p>
          <div className="mt-[6px] pl-2 flex flex-col gap-4">
            {channels.map(([label, value], i) => (
              <div key={label} className="h-[19px] flex items-center">
                <label htmlFor={`ch${i}`} className="w-[85px]">{label}</label>
                <input id={`ch${i}`} defaultValue={value} className="w-14 h-[19px] px-[3px] bg-[#454545] border border-[#6a6a6a] text-white outline-none" />
              </div>
            ))}
          </div>
        </div>
        <div className="pt-[5px] flex flex-col gap-[9px]">
          <button className="w-[90px] h-[25px] rounded-full border-2 border-[#dcdcdc] text-white">OK</button>
          <button className="w-[90px] h-[25px] rounded-full border-2 border-[#777] text-white">初期設定</button>
        </div>
      </div>
    </section>
  );
};

/* ---------- taskbar ---------- */

const AppTile = ({ text, bg, fg }: { text: string; bg: string; fg: string }) => (
  <svg viewBox="0 0 44 44" className="w-11 h-11">
    <rect x="1" y="1" width="42" height="42" fill={bg} stroke={fg} strokeWidth="2" />
    <text x="22" y="30" textAnchor="middle" fontSize="23" fontFamily="Open Sans, sans-serif" fontWeight="600" fill={fg}>{text}</text>
  </svg>
);

const apps = [
  { name: 'Edge', running: true, icon: <FaEdgeLegacy className="w-11 h-11 text-[#0078d7]" /> },
  {
    name: 'Explorer',
    icon: (
      <svg viewBox="0 0 42 36" className="w-[42px] h-9">
        <path d="M0 1h18l3 4h21v30H0z" fill="#ffe393" />
        <path d="M0 1h18l2 5H0z" fill="#f2b91d" />
        <path d="M3 2h8v3H3z" fill="#fff" />
        <path d="M7 35V18h28v17h-7v-8H14v8z" fill="#3db5e6" />
      </svg>
    ),
  },
  {
    name: 'Creative Cloud',
    icon: (
      <svg viewBox="0 0 44 44" className="w-11 h-11" fill="none" stroke="#fff">
        <rect width="44" height="44" fill="#dc060c" stroke="none" />
        <path d="M15 34.5a9.5 9.5 0 0 1-3-18A13 13 0 1 1 31 33q-2 1.5-5 1.5z" strokeWidth="1.6" />
        <path d="M20 30.5h-5a5.500 5.500 0 1 1 4-9.500l7 8" strokeWidth="2.2" />
        <path d="M23 29.5q2 1 4 1a8.500 8.500 0 1 0-8.500-10" strokeWidth="2.2" />
        <path d="M22 17l7 8.500" strokeWidth="2.2" />
      </svg>
    ),
  },
  {
    name: 'Outlook',
    running: true,
    icon: (
      <svg viewBox="0 0 42 42" className="w-[42px] h-[42px]">
        <path d="M22 11h19v20H22z" fill="#fff" />
        <path d="M25 13l7 8 9-10" fill="none" stroke="#0072c6" strokeWidth="2" />
        <path d="M0 4l25-4v42L0 37z" fill="#0072c6" />
        <ellipse cx="12" cy="21" rx="5" ry="7" fill="none" stroke="#fff" strokeWidth="3" />
      </svg>
    ),
  },
  { name: 'Illustrator', running: true, active: true, icon: <AppTile text="Ai" bg="#261300" fg="#ff7f18" /> },
  { name: 'Photoshop', icon: <AppTile text="Ps" bg="#001d26" fg="#19b5e6" /> },
  { name: 'Lightroom', icon: <AppTile text="Lr" bg="#10222d" fg="#aed0e8" /> },
  {
    name: 'iTunes',
    icon: (
      <svg viewBox="0 0 44 44" className="w-11 h-11">
        <defs>
          <linearGradient id="tunesRing" x1="0" y1="0" x2="1" y2="1">
            <stop offset="0" stopColor="#f04e8c" />
            <stop offset="0.5" stopColor="#b05cf0" />
            <stop offset="1" stopColor="#28b4f8" />
          </linearGradient>
          <linearGradient id="tunesNote" x1="0" y1="0" x2="0" y2="1">
            <stop offset="0" stopColor="#f5566e" />
            <stop offset="1" stopColor="#6a6cf5" />
          </linearGradient>
        </defs>
        <circle cx="22" cy="22" r="20.5" fill="#f6f4f8" stroke="url(#tunesRing)" strokeWidth="2.5" />
        <path d="M15 11l17-3v20c0 3-2 5-5 5s-4-4-1-6l3-1V15l-11 2v14c0 3-2 5-5 5s-4-4-1-6l3-1z" fill="url(#tunesNote)" />
      </svg>
    ),
  },
  {
    name: 'Paint',
    running: true,
    icon: (
      <svg viewBox="0 0 46 46" className="w-[46px] h-[46px]">
        <path d="M24 8c12-1 20 6 20 16S34 44 20 44c-6 0-5-4-4-8s-3-6-7-3-8 2-8-3C1 18 12 9 24 8z" fill="#c6e0f2" />
        <circle cx="9" cy="25" r="4" fill="#e0413a" />
        <circle cx="17" cy="18" r="4" fill="#63b646" />
        <circle cx="26" cy="14" r="4" fill="#f5b52a" />
        <circle cx="20" cy="29" r="2.5" fill="#06161b" />
        <path d="M39 10 23 44" stroke="#d9822b" strokeWidth="3" strokeLinecap="round" />
        <path d="M36 0c6 1 9 5 9 10l-8 4-3-4z" fill="#e8c79a" />
      </svg>
    ),
  },
];

const Taskbar = () => (
  <footer className="h-[82px] shrink-0 bg-[#06161b] flex items-stretch text-white">
    <button aria-label="スタート" className="w-24 flex items-center justify-center">
      <FaWindows className="w-8 h-9" />
    </button>
    <label className="mt-[2px] w-[688px] bg-[#f1f1f1] flex items-center pl-[18px] pr-[30px] text-[#2b2b2b]">
      <span className="w-11 h-11 rounded-full border-[3px] border-[#7c7c7c] shrink-0">
        <span className="block w-full h-full rounded-full border-4 border-black" />
      </span>
      <input
        placeholder="ここに入力して検索"
        aria-label="ここに入力して検索"
        className="ml-[18px] flex-1 min-w-0 bg-transparent text-2xl outline-none placeholder:text-[#2b2b2b]"
      />
      <svg viewBox="0 0 22 34" className="w-[22px] h-[34px]" fill="none" stroke="currentColor" strokeWidth="2">
        <rect x="5.5" y="1" width="11" height="22" rx="5" />
        <path d="M1 15v6q0 6 6 6h8q6 0 6-6v-6M11 27v5M5 32h12" />
      </svg>
    </label>
    <nav className="ml-[6px] flex gap-[2px]">
      {apps.map((app) => (
        <button
          key={app.name}
          aria-label={app.name}
          className={clsx('relative w-24 flex items-center justify-center', app.active && 'bg-[#3a4548]')}
        >
          {app.icon}
          {app.running && (
            <span className={clsx('absolute bottom-0 h-1 bg-[#76b9ed]', app.active ? 'inset-x-0' : 'inset-x-2')} />
          )}
        </button>
      ))}
    </nav>
    <div className="flex-1" />
    <div className="flex items-center gap-[34px]">
      <svg viewBox="0 0 18 22" className="w-[18px] h-[22px]" fill="#fff">
        <path d="M3 0h5.5v6H1c0-3 1-5 2-6zM9.5 0H15c1 1 2 3 2 6H9.5zM0 7h18v6c0 12-18 12-18 0z" />
      </svg>
      <svg viewBox="0 0 22 22" className="w-[22px] h-[22px]" fill="none" stroke="#fff" strokeWidth="1.4">
        <path d="M5 6h11v9H5zM10 15v3M7 18h7M14 8 21 1M16 1h5v5M7 14l-6 7M1 16v5h5" />
      </svg>
      <svg viewBox="0 0 28 16" className="w-7 h-4" fill="none" stroke="#fff" strokeWidth="2.2"><path d="M1 15 14 2l13 13" /></svg>
      <svg viewBox="0 0 32 26" className="w-8 h-[26px]" fill="none" stroke="#fff" strokeWidth="2">
        <path d="M2 1h28v19H2zM0 25h32M16 18v-7" /><path d="M10 12l6-7 6 7z" fill="#fff" stroke="none" />
      </svg>
      <svg viewBox="0 0 32 20" className="w-8 h-5" fill="#fff">
        <path d="M1 1h27v17H1zM29 6h2v8h-2" fill="none" stroke="#fff" strokeWidth="2" /><path d="M4 4h21v11H4z" />
      </svg>
      <svg viewBox="0 0 26 26" className="w-[26px] h-[26px]" fill="none" stroke="#fff" strokeWidth="2">
        <path d="M1 25C1 11 11 1 25 1M7 25C7 15 15 7 25 7M13 25c0-7 5-12 12-12" /><circle cx="21.5" cy="22" r="3.5" fill="#fff" stroke="none" />
      </svg>
      <svg viewBox="0 0 34 26" className="w-[34px] h-[26px]" fill="none" stroke="#fff" strokeWidth="2">
        <path d="M1 9h5l7-7v22l-7-7H1zM17 9q4 4 0 8M21 5q8 8 0 16" /><path d="M26 2q11 11 0 22" stroke="#7c888c" />
      </svg>
      <svg viewBox="0 0 34 34" className="w-[34px] h-[34px]" fill="none" stroke="#fff" strokeWidth="2.2">
        <path d="M9 18c-6 0-9 4-8 9s6 5 9 3" /><path d="M12 24 23 3c1-2 5-1 4 2L17 26l-6 5zM24 16c5-5 9 1 4 3s-5 5-10 6" />
      </svg>
      <svg viewBox="0 0 24 32" className="w-6 h-8" fill="none" stroke="#fff" strokeWidth="2.2">
        <path d="M1 31 12 2l11 29M5 21h14" />
      </svg>
    </div>
    <div className="ml-5 w-[126px] py-[5px] flex flex-col justify-center gap-2 text-center text-[23px] leading-7 font-light">
      <time>16:51</time>
      <time>2018/07/27</time>
    </div>
    <button aria-label="通知" className="relative ml-9 w-12 self-center h-[50px]">
      <svg viewBox="0 0 34 34" className="absolute left-0 top-0 w-[34px] h-[34px]" fill="#fff">
        <path d="M0 0h34v26H20l-6 8v-8H0z" /><path d="M7 6h20v2H7zM7 12h20v2H7zM7 18h12v2H7z" fill="#06161b" />
      </svg>
      <span className="absolute right-0 bottom-0 w-[34px] h-[34px] rounded-full border-2 border-[#9a9a9a] bg-[#2c3638] text-[22px] font-semibold leading-[30px]">5</span>
    </button>
    <div className="ml-6 mr-[9px] w-px bg-[#8a9294]" />
  </footer>
);

/* ---------- document area ---------- */

const App = () => (
  <div className="relative h-screen flex flex-col overflow-hidden bg-[#535353] [font-family:'Noto_Sans','Noto_Sans_CJK_JP',sans-serif]">
    <MenuBar />
    <ControlBar />
    <div className="flex-1 min-h-0 flex">
      <Toolbar />
      <main className="flex-1 min-w-0 flex flex-col">
        <div className="h-[58px] shrink-0 bg-[#424242] border-b-2 border-[#383838] flex">
          <div className="w-[536px] bg-[#535353] border-r-2 border-[#383838] flex items-center justify-between pl-5 pr-3 text-[23px] text-[#f0f0f0] [font-feature-settings:'palt']">
            <span className="whitespace-nowrap">名称未設定-1 @ 97% (CMYK/GPU プレビュー)</span>
            <button aria-label="タブを閉じる"><Cross className="w-[13px] h-[13px] text-[#e0e0e0]" /></button>
          </div>
        </div>
        <div className="flex-1 min-h-0 flex bg-[#5f5f5f]">
          <div className="flex-1 min-w-0 pt-[49px] pl-[887px]">
            <div className="w-[1190px] h-full border-2 border-b-0 border-[#e8141c] pl-[14px] pr-3 pt-[14px]">
              <div className="h-full border-[3px] border-b-0 border-black bg-white" />
            </div>
          </div>
          <div className="w-[34px] border-r-4 border-[#424242] bg-[#494949] flex flex-col items-center justify-end pb-3 relative">
            <div className="absolute top-[820px] w-[26px] h-[50px] rounded-full bg-[#626262]" />
            <Chevron className="w-4 h-[10px] text-[#a8a8a8]" />
          </div>
        </div>
        <StatusBar />
      </main>
    </div>
    <Taskbar />
    <SwatchesPanel />
    <HalftoneDialog />
    <PathfinderPanel />
    <TransparencyPanel />
    <GradientPanel />
    <LayersPanel />
  </div>
);

export default App;
